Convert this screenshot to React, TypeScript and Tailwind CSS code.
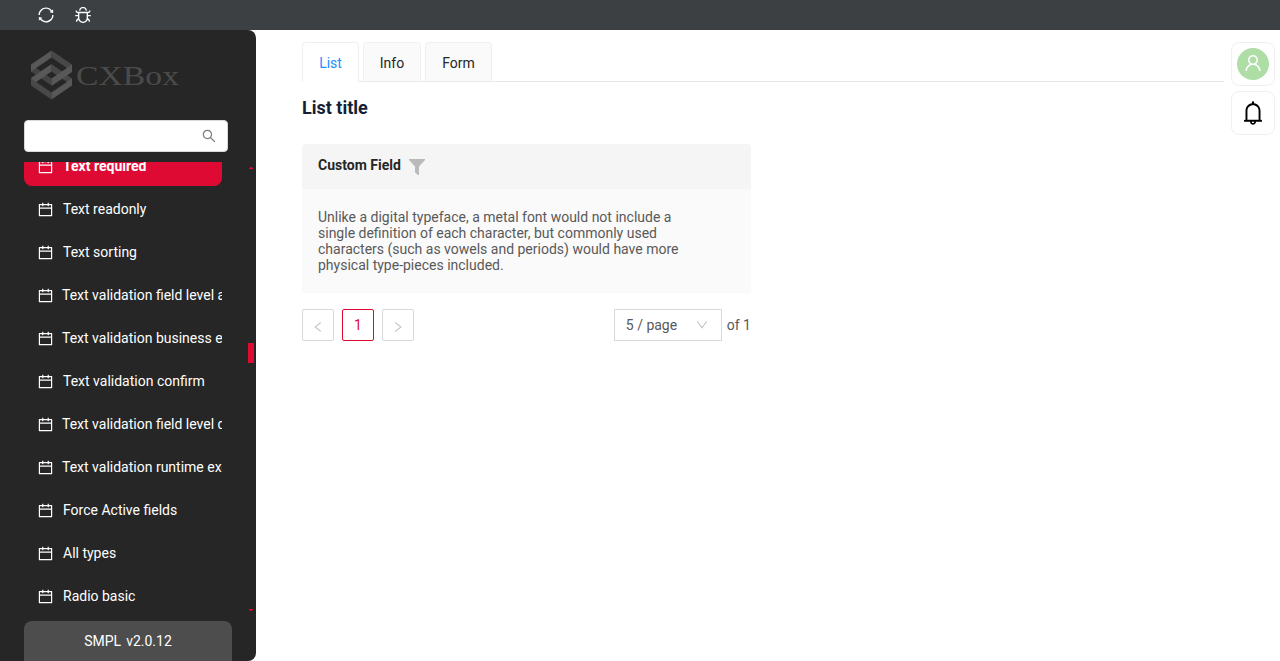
import React from 'react';
import {
  AiOutlineBell,
  AiOutlineBug,
  AiOutlineCalendar,
  AiOutlineDown,
  AiOutlineLeft,
  AiOutlineRight,
  AiOutlineSearch,
  AiOutlineSync,
  AiOutlineUser,
} from 'react-icons/ai';

const VB = '64 64 896 896';

const menu = [
  { label: 'Text required', active: true },
  { label: 'Text readonly' },
  { label: 'Text sorting' },
  { label: 'Text validation field level annotation', long: true },
  { label: 'Text validation business exception', long: true },
  { label: 'Text validation confirm' },
  { label: 'Text validation field level dynamic', long: true },
  { label: 'Text validation runtime exception', long: true },
  { label: 'Force Active fields' },
  { label: 'All types' },
  { label: 'Radio basic' },
];

function Logo() {
  return (
    <svg className="block" width="150" height="50" viewBox="0 0 150 50">
      <path d="M0 14.500L20.500 28.500V35.500L0 21.500Z" fill="#444" />
      <path d="M20.500 14L41 28.500V35.500L20.500 21.500Z" fill="#484848" />
      <path d="M20.500 0.500L41 14.500V21.500L20.500 7.500Z" fill="#484848" />
      <path d="M20.500 0.500V7.500L0 21.500V14.500Z" fill="#585858" />
      <path d="M20.500 14V21.500L0 35.500V28Z" fill="#585858" />
      <path d="M0 28.500L20.500 42.500V49.500L0 35.500Z" fill="#484848" />
      <path d="M41 28.500V35.500L20.500 49.500V42.500Z" fill="#585858" />
      <path d="M41 14.500V22L20.500 36V28.500Z" fill="#585858" />
      <text x="45" y="34.500" fontSize="27" fontFamily="'Liberation Serif', serif" fill="#4b4b4b" textLength="103" lengthAdjust="spacingAndGlyphs">CXBox</text>
    </svg>
  );
}

function Sidebar() {
  return (
    <aside className="flex h-[631px] w-64 shrink-0 flex-col rounded-r-lg bg-[#262626] pl-6 text-white">
      <div className="h-[90px] pl-[7px] pt-5">
        <Logo />
      </div>
      <div className="flex h-8 w-[204px] shrink-0 items-center justify-end rounded border border-[#d9d9d9] bg-white pr-[11px]">
        <AiOutlineSearch size={14} viewBox={VB} color="#7f7f7f" />
      </div>
      <div className="mt-2.5 flex h-[459px] shrink-0">
        <nav className="flex w-[198px] flex-col justify-start gap-[3px] overflow-hidden">
          <div className="-mt-[19px] h-0 shrink-0" />
          {menu.map((m) => (
            <div
              key={m.label}
              className={`flex h-10 w-[198px] shrink-0 items-center overflow-hidden rounded-lg pl-3.5 ${m.active ? 'bg-[#de0a33] font-bold' : ''}`}
            >
              <AiOutlineCalendar size={15} viewBox={VB} className="shrink-0" />
              <span className={`whitespace-nowrap ${m.long ? 'ml-[9px]' : 'ml-2.5'}`}>{m.label}</span>
            </div>
          ))}
        </nav>
        <div className="ml-[26px] flex w-1.5 flex-col items-center pt-[5px]">
          <svg width="4" height="2" viewBox="0 0 4 2"><path d="M0 2V1H1V0H3V1H4V2Z" fill="#de0a33" /></svg>
          <div className="mt-[174px] h-5 w-1.5 bg-[#de0a33]" />
          <svg className="mt-[246px]" width="4" height="2" viewBox="0 0 4 2"><path d="M0 0H4V1H3V2H1V1H0Z" fill="#de0a33" /></svg>
        </div>
      </div>
      <div className="flex h-10 w-52 shrink-0 items-center justify-center gap-[5px] rounded-t-lg bg-[#4d4d4d]">
        <span>SMPL</span>
        <span>v2.0.12</span>
      </div>
    </aside>
  );
}

function Tabs() {
  return (
    <div className="flex h-10 w-[922px] shadow-[inset_0_-1px_0_#e8e8e8]">
      <div className="mr-1 flex w-[57px] items-center justify-center rounded-t border border-b-0 border-[#f0f0f0] bg-white pt-px text-[#1890ff]">List</div>
      <div className="mr-1 flex w-[58px] items-center justify-center rounded-t border border-[#f0f0f0] border-b-[#e8e8e8] bg-[#fafafa] pt-0.5">Info</div>
      <div className="flex w-[67px] items-center justify-center rounded-t border border-[#f0f0f0] border-b-[#e8e8e8] bg-[#fafafa] pt-0.5">Form</div>
    </div>
  );
}

function Pagination() {
  return (
    <div className="mt-4 flex h-8 w-[449px] items-center text-[#595959]">
      <button className="flex h-8 w-8 items-center justify-center rounded-[2px] border border-[#d9d9d9] pt-[3px] text-[#bfbfbf]"><AiOutlineLeft size={12} viewBox={VB} /></button>
      <button className="ml-2 flex h-8 w-8 items-center justify-center rounded-[2px] border border-[#de0a33] text-[#de0a33]">1</button>
      <button className="ml-2 flex h-8 w-8 items-center justify-center rounded-[2px] border border-[#d9d9d9] pt-[3px] text-[#bfbfbf]"><AiOutlineRight size={12} viewBox={VB} /></button>
      <div className="ml-auto flex h-8 w-[108px] items-center justify-between border border-[#d9d9d9] pl-[11px] pr-[13px]">
        <span>5 / page</span>
        <AiOutlineDown size={12} viewBox={VB} color="#bfbfbf" />
      </div>
      <span className="ml-[5px] whitespace-nowrap">of 1</span>
    </div>
  );
}

export default function App() {
  return (
    <div className="flex h-[661px] w-[1280px] flex-col overflow-hidden bg-white font-['Roboto',sans-serif] text-sm text-[#262626]">
      <header className="flex h-[30px] shrink-0 items-center gap-[21px] bg-[#3c4043] pl-[38px] text-white">
        <AiOutlineSync size={16} viewBox={VB} />
        <AiOutlineBug size={16} viewBox={VB} />
      </header>
      <div className="flex">
        <Sidebar />
        <main className="ml-[46px] w-[922px] pt-3">
          <Tabs />
          <h1 className="mt-3.5 text-lg font-bold leading-6 text-[#141f35]">List title</h1>
          <section className="mt-6 w-[449px] overflow-hidden rounded-t bg-[#fafafa]">
            <div className="flex h-[45px] items-center gap-2 bg-[#f5f5f5] pl-4">
              <span className="pb-[3px] font-bold">Custom Field</span>
              <svg width="16" height="16" viewBox="0 0 16 16"><path d="M0 0H16V1L10 7.500V16H9L6 13.500V7.500L0 1Z" fill="#bababa" /></svg>
            </div>
            <p className="h-[104px] pl-4 pt-5 leading-4 text-[#595959]">
              Unlike a digital typeface, a metal font would not include a<br />
              single definition of each character, but commonly used<br />
              characters (such as vowels and periods) would have more<br />
              physical type-pieces included.
            </p>
          </section>
          <Pagination />
        </main>
        <div className="ml-[7px] flex flex-col gap-[5px] pt-3">
          <div className="flex h-11 w-11 items-center justify-center rounded-lg border border-[#f0f0f0]">
            <div className="flex h-8 w-8 items-center justify-center rounded-full bg-[#aedda6] text-white"><AiOutlineUser size={18} viewBox={VB} className="-mt-0.5" /></div>
          </div>
          <div className="flex h-11 w-11 items-center justify-center rounded-lg border border-[#f0f0f0] text-black"><AiOutlineBell size={24} viewBox={VB} /></div>
        </div>
      </div>
    </div>
  );
}
